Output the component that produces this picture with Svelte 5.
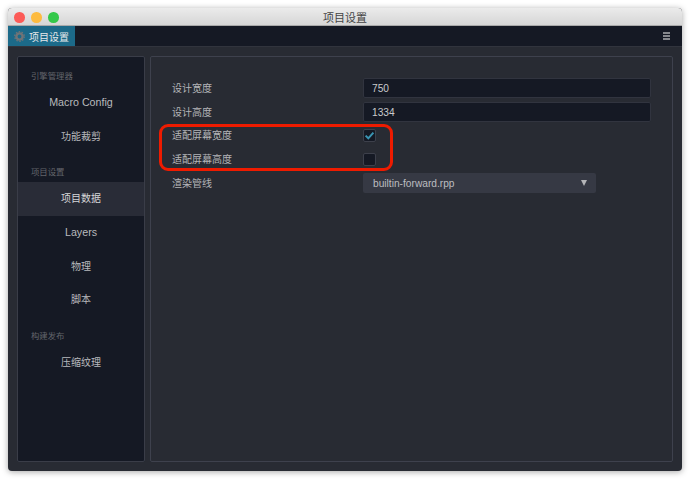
<script>
  const groups = [
    { title: '引擎管理器', items: ['Macro Config', '功能裁剪'] },
    { title: '项目设置', items: ['项目数据', 'Layers', '物理', '脚本'] },
    { title: '构建发布', items: ['压缩纹理'] }
  ];
  const active = '项目数据';
  const isLatin = (text) => /^[A-Za-z ]+$/.test(text);
</script>

<div class="page">
  <div class="window">
    <header class="titlebar">
      <div class="lights">
        <span class="light red"></span>
        <span class="light yellow"></span>
        <span class="light green"></span>
      </div>
      <span class="title">项目设置</span>
    </header>

    <div class="tabbar">
      <div class="tab">
        <svg class="gear" width="11" height="11" viewBox="0 0 12 12">
          <circle cx="6" cy="6" r="3.4" fill="none" stroke="#717376" stroke-width="2.6" />
          <circle cx="6" cy="6" r="5.2" fill="none" stroke="#717376" stroke-width="1.4" stroke-dasharray="1.7 1.57" />
        </svg>
        <span>项目设置</span>
      </div>
      <div class="menu" aria-label="menu">
        <i></i><i></i><i></i>
      </div>
    </div>

    <div class="body">
      <nav class="side">
        {#each groups as group}
          <div class="group-title">{group.title}</div>
          {#each group.items as item}
            <div class="nav-item" class:active={item === active} class:latin={isLatin(item)}>{item}</div>
          {/each}
        {/each}
      </nav>

      <main class="panel">
        <div class="row">
          <span class="label">设计宽度</span>
          <div class="input">750</div>
        </div>
        <div class="row">
          <span class="label">设计高度</span>
          <div class="input">1334</div>
        </div>
        <div class="row check-row">
          <span class="label">适配屏幕宽度</span>
          <div class="check">
            <svg width="11" height="11" viewBox="0 0 11 11">
              <path d="M1.6 5.6 L4.3 8.3 L9.4 2.6" fill="none" stroke="#3a95b3" stroke-width="2" />
            </svg>
          </div>
        </div>
        <div class="row check-row">
          <span class="label">适配屏幕高度</span>
          <div class="check"></div>
        </div>
        <div class="row">
          <span class="label">渲染管线</span>
          <div class="select">
            <span>builtin-forward.rpp</span>
            <span class="arrow"></span>
          </div>
        </div>
        <div class="highlight"></div>
      </main>
    </div>
  </div>
</div>

<style>
  :global(body) {
    margin: 0;
    background: #fff;
  }

  .page {
    width: 690px;
    height: 479px;
    box-sizing: border-box;
    padding: 8px;
    font-family: "Liberation Sans", "Noto Sans CJK SC", sans-serif;
    font-size: 10px;
    color: #c4c5c7;
    overflow: hidden;
  }

  .window {
    width: 674px;
    height: 463px;
    display: flex;
    flex-direction: column;
    background: #282b33;
    border-radius: 4px;
    box-shadow: 0 1px 6px rgba(0, 0, 0, 0.35);
    overflow: hidden;
  }

  .titlebar {
    height: 17px;
    flex: none;
    position: relative;
    display: flex;
    align-items: center;
    justify-content: center;
    background: linear-gradient(#ebebeb, #d6d6d6);
    border-bottom: 1px solid #a9a9a9;
    color: #444;
    font-size: 11px;
  }

  .lights {
    position: absolute;
    left: 6px;
    top: 4px;
    display: flex;
    gap: 6.5px;
  }

  .light {
    width: 10.5px;
    height: 10.5px;
    border-radius: 50%;
  }

  .red { background: #fc5b57; }
  .yellow { background: #fdbb40; }
  .green { background: #34c84a; }

  .tabbar {
    height: 20px;
    flex: none;
    display: flex;
    justify-content: space-between;
    align-items: stretch;
    background: #151924;
    border-bottom: 1px solid #31343d;
  }

  .tab {
    width: 66.5px;
    display: flex;
    align-items: center;
    gap: 4px;
    padding-left: 6px;
    box-sizing: border-box;
    background: #1c6a89;
    color: #e6e8ea;
  }

  .menu {
    display: flex;
    flex-direction: column;
    justify-content: center;
    gap: 1px;
    padding-right: 12.5px;
  }

  .menu i {
    display: block;
    width: 7px;
    height: 2px;
    background: #85878c;
  }

  .body {
    flex: 1;
    display: flex;
    gap: 5px;
    padding: 9px;
    min-height: 0;
  }

  .side {
    width: 128px;
    box-sizing: border-box;
    flex: none;
    background: #151924;
    border: 1px solid #3a3d48;
    border-radius: 2px;
    padding-top: 13px;
  }

  .group-title {
    height: 13px;
    line-height: 13px;
    padding-left: 13px;
    font-size: 8.4px;
    color: #63656b;
    margin: 13px 0 3px;
  }

  .group-title:first-child {
    margin-top: 0;
  }

  .nav-item {
    height: 33.7px;
    line-height: 34.6px;
    text-align: center;
    font-size: 10px;
    color: #b9babd;
  }

  .nav-item.latin {
    font-size: 10.7px;
    line-height: 33.7px;
  }

  .nav-item.active {
    background: #292c37;
    color: #d6d7d9;
  }

  .panel {
    flex: 1;
    position: relative;
    box-sizing: border-box;
    background: #282b33;
    border: 1px solid #3e414d;
    border-radius: 2px;
    padding: 19px 21px 0 21px;
    display: flex;
    flex-direction: column;
  }

  .row {
    height: 24px;
    display: flex;
    align-items: center;
  }

  .check-row {
    height: 23.5px;
  }

  .label {
    width: 191px;
    flex: none;
    font-size: 10px;
    color: #b4b5b8;
    padding-bottom: 2px;
  }

  .input {
    flex: 1;
    height: 20px;
    box-sizing: border-box;
    line-height: 19.5px;
    padding-left: 8px;
    background: #151924;
    border: 1px solid #31343f;
    border-radius: 2px;
    font-size: 10.2px;
    color: #c9cacc;
  }

  .check {
    width: 13px;
    height: 13px;
    box-sizing: border-box;
    display: flex;
    align-items: center;
    justify-content: center;
    background: #151924;
    border: 1px solid #3d404b;
    border-radius: 2px;
  }

  .select {
    width: 233px;
    height: 20px;
    box-sizing: border-box;
    display: flex;
    align-items: center;
    justify-content: space-between;
    padding: 0 9px 0 10px;
    background: #363944;
    border-radius: 2px;
    font-size: 10.2px;
    color: #bcbdc0;
  }

  .arrow {
    width: 0;
    height: 0;
    border-left: 3.5px solid transparent;
    border-right: 3.5px solid transparent;
    border-top: 6px solid #b4b5b8;
  }

  .highlight {
    position: absolute;
    left: 8px;
    top: 67px;
    width: 234px;
    height: 47px;
    box-sizing: border-box;
    border: 3px solid #ee1b00;
    border-radius: 9px;
    pointer-events: none;
  }
</style>
